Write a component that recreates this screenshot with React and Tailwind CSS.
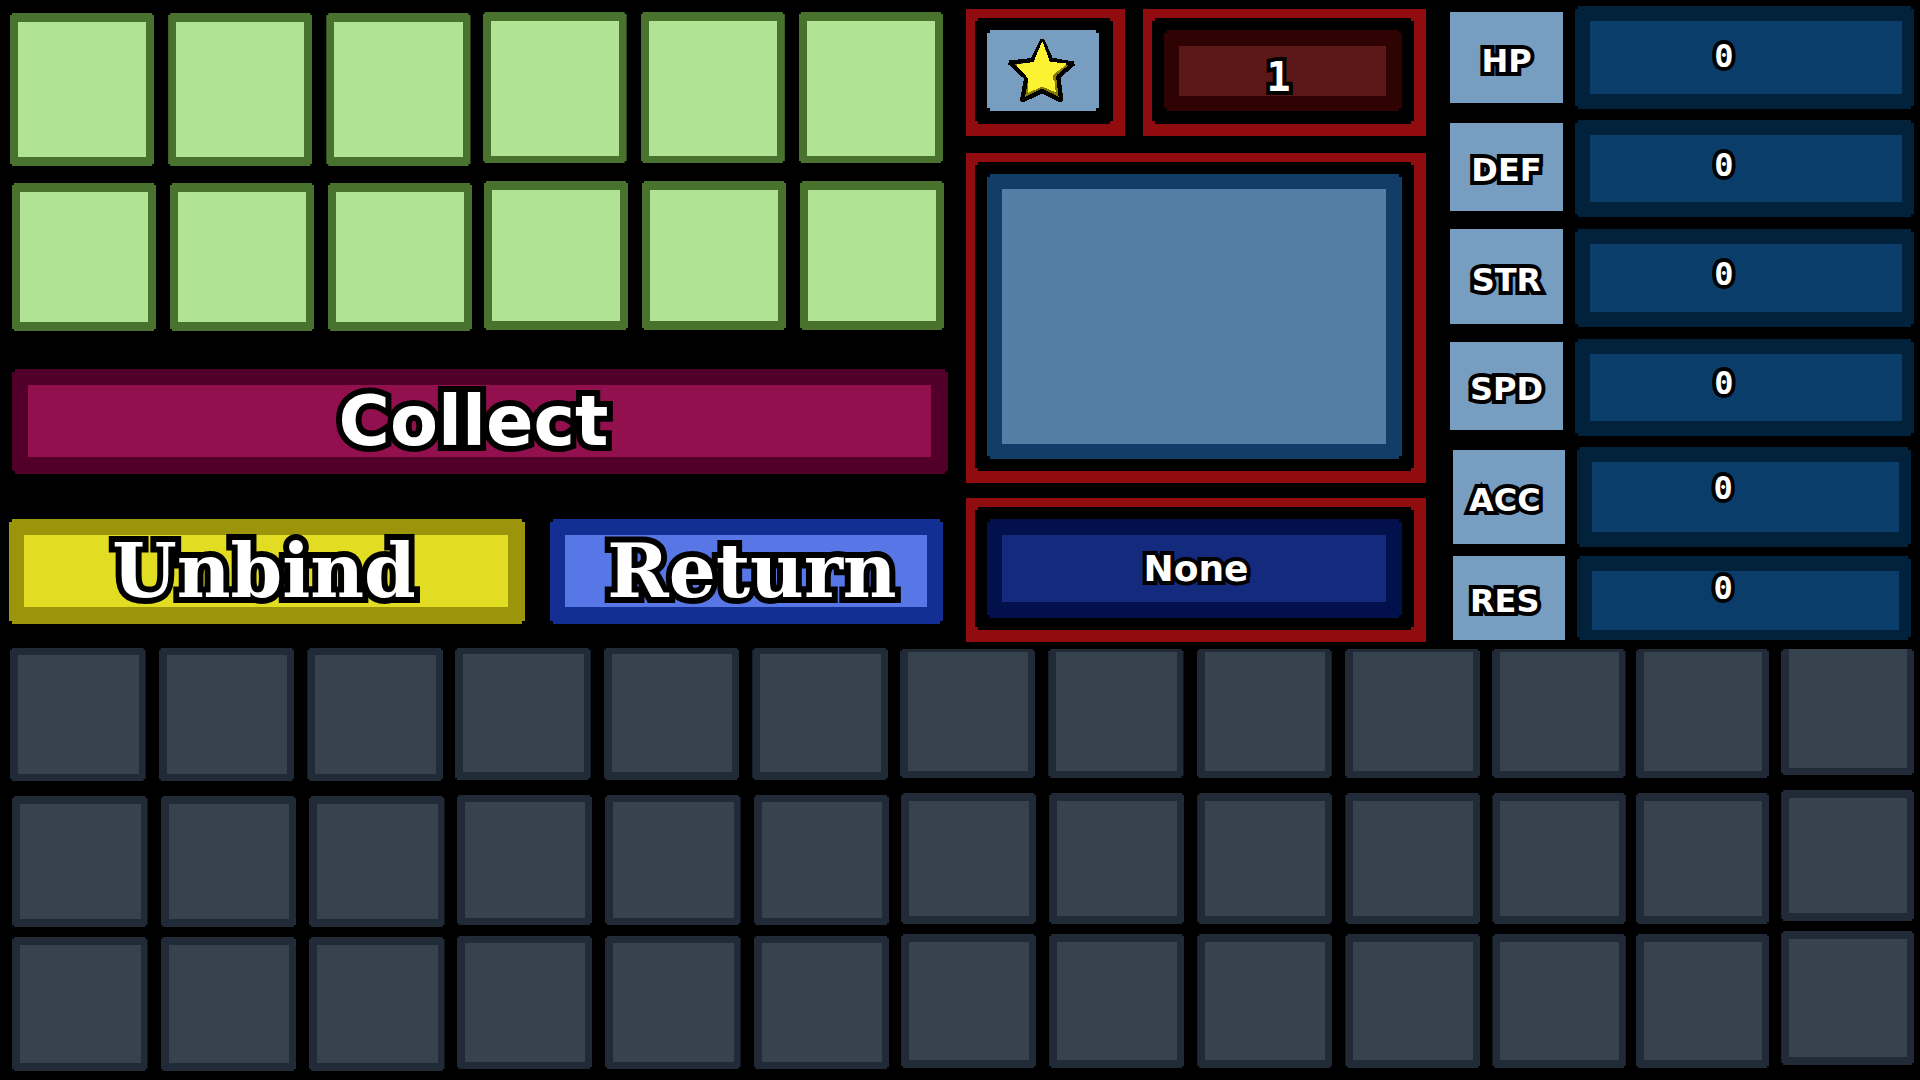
import React from "react";

const NOTCH_2 =
  "[clip-path:polygon(2px_0,calc(100%_-_2px)_0,calc(100%_-_2px)_2px,100%_2px,100%_calc(100%_-_2px),calc(100%_-_2px)_calc(100%_-_2px),calc(100%_-_2px)_100%,2px_100%,2px_calc(100%_-_2px),0_calc(100%_-_2px),0_2px,2px_2px)]";
const NOTCH_3 =
  "[clip-path:polygon(3px_0,calc(100%_-_3px)_0,calc(100%_-_3px)_3px,100%_3px,100%_calc(100%_-_3px),calc(100%_-_3px)_calc(100%_-_3px),calc(100%_-_3px)_100%,3px_100%,3px_calc(100%_-_3px),0_calc(100%_-_3px),0_3px,3px_3px)]";

const OUTLINE_BIG = "[-webkit-text-stroke:12px_#000] [paint-order:stroke_fill]";
const OUTLINE_SMALL = "[-webkit-text-stroke:8px_#000] [paint-order:stroke_fill]";

const SANS = "font-['DejaVu_Sans',sans-serif] font-bold";
const SERIF = "font-['DejaVu_Serif',serif] font-bold";
const MONO = "font-['DejaVu_Sans_Mono',monospace] font-bold";

const times = (n) => Array.from({ length: n }, (_, i) => i);

/* Equipped-item slots: each row has a left and a right bank of three. */
const gearRows = [
  {
    row: "pl-px pr-[5px]",
    banks: [
      { first: 1, pad: "pt-px", tile: "h-[153px] pt-[9px] pb-[9px]" },
      { first: 4, pad: "", tile: "h-[151px] pt-[9px] pb-[7px]" },
    ],
  },
  {
    row: "pl-[3px] pr-1 pt-[15px]",
    banks: [
      { first: 7, pad: "pt-[2px]", tile: "h-[148px] py-[9px]" },
      { first: 10, pad: "", tile: "h-[149px] py-[9px]" },
    ],
  },
];

/* Inventory rows, split into banks that step upward from left to right. */
const inventoryRows = [
  {
    row: "pl-[10px] h-[142px]",
    pads: ["", "", "pt-px", "pt-px", "pt-px"],
    tiles: [
      "h-[133px] py-[7px]",
      "h-[132px] pt-[6px] pb-[8px]",
      "h-[129px] pt-[3px] pb-[7px]",
      "h-[129px] pt-[3px] pb-[7px]",
      "h-[126px] pb-[7px]",
    ],
  },
  {
    row: "pl-3 h-[141px]",
    pads: ["pt-[6px]", "pt-[5px]", "pt-[3px]", "pt-[3px]", ""],
    tiles: ["h-[131px] py-2", "h-[130px] py-[7px]", "h-[131px] py-2", "h-[131px] py-2", "h-[131px] py-2"],
  },
  {
    row: "pl-3 h-[149px]",
    pads: ["pt-[6px]", "pt-[5px]", "pt-[3px]", "pt-[3px]", ""],
    tiles: ["h-[134px] py-2", "h-[133px] py-[7px]", "h-[134px] py-2", "h-[134px] py-2", "h-[134px] py-2"],
  },
];

const inventoryBanks = [
  { first: 1, count: 3, grid: "grid-cols-3 gap-x-[13px]" },
  { first: 4, count: 3, grid: "grid-cols-3 gap-x-[13px]" },
  { first: 7, count: 4, grid: "grid-cols-4 gap-x-[13px]" },
  { first: 11, count: 2, grid: "grid-cols-2 gap-x-[10px]" },
  { first: 13, count: 1, grid: "grid-cols-1" },
];

const stats = [
  { name: "HP", value: 0, row: "mt-[6px]", label: "mt-[6px] h-[91px]", box: "h-[103px] pb-[15px]", text: "pt-[23px]" },
  { name: "DEF", value: 0, row: "mt-[11px]", label: "mt-[3px] h-[88px]", box: "h-[97px] pb-[15px]", text: "pt-[18px]" },
  { name: "STR", value: 0, row: "mt-3", label: "h-[95px]", box: "h-[98px] pb-[15px]", text: "pt-[18px]" },
  { name: "SPD", value: 0, row: "mt-3", label: "mt-[3px] h-[88px]", box: "h-[97px] pb-[15px]", text: "pt-[17px]" },
  { name: "ACC", value: 0, row: "mt-[11px] px-[3px]", label: "mt-[3px] h-[94px] pr-2", box: "h-[100px] pb-[15px]", text: "pt-[14px]" },
  { name: "RES", value: 0, row: "mt-[9px] px-[3px]", label: "h-[84px] pr-2", box: "h-[84px] pb-[10px]", text: "pt-[5px]" },
];

function GearSlot({ index, tile }) {
  return (
    <button type="button" aria-label={`Gear slot ${index}`} className={`block w-full bg-[#49722f] px-2 ${NOTCH_2} ${tile}`}>
      <span className="block h-full bg-[#b1e394]" />
    </button>
  );
}

function InventorySlot({ index, tile }) {
  return (
    <button type="button" aria-label={`Inventory slot ${index}`} className={`block w-full bg-[#202b37] pl-2 pr-[7px] ${NOTCH_2} ${tile}`}>
      <span className="block h-full bg-[#37424f]" />
    </button>
  );
}

function ActionButton({ className, face, children }) {
  return (
    <button type="button" className={`h-[105px] pt-4 pb-[17px] ${NOTCH_3} ${className}`}>
      <span className={`flex h-full items-center justify-center text-white ${face}`}>{children}</span>
    </button>
  );
}

function Frame({ className = "", inner = "p-3", children }) {
  return (
    <div className={`bg-[#900c0f] pt-[9px] pr-3 pb-3 pl-[9px] ${className}`}>
      <div className={`h-full bg-black ${inner} ${NOTCH_3}`}>{children}</div>
    </div>
  );
}

function Star() {
  return (
    <svg viewBox="40 30 219 210" width="73" height="70" shapeRendering="crispEdges" aria-hidden="true">
      <path
        fill="#857a05"
        stroke="#000"
        strokeWidth="13"
        strokeLinejoin="bevel"
        d="M152 42L178 101L245 113L200 152L209 224L152 195L91 224L104 156L54 110L123 102z"
      />
      <path
        fill="#fbf232"
        d="M152 47L160 66L174 107L226 113L214 124L192 140L184 148L184 160L190 168L192 199L176 192L152 182L128 192L109 201L110 160L98 142L72 116L126 108L142 68z"
      />
    </svg>
  );
}

export default function App() {
  return (
    <main className="flex min-h-screen flex-col overflow-hidden bg-black">
      <div className="grid grid-cols-[939fr_460fr_470fr] gap-x-[18px] pl-[9px] pr-[6px]">
        <section className="flex min-w-0 flex-col pt-3">
          {gearRows.map((r, ri) => (
            <div key={ri} className={`grid grid-cols-2 gap-x-3 ${r.row}`}>
              {r.banks.map((b) => (
                <div key={b.first} className={`grid grid-cols-3 gap-x-[14px] ${b.pad}`}>
                  {times(3).map((i) => (
                    <GearSlot key={i} index={b.first + i} tile={b.tile} />
                  ))}
                </div>
              ))}
            </div>
          ))}

          <ActionButton
            className="mt-[38px] ml-[3px] bg-[#52002a] pl-4 pr-[17px]"
            face={`bg-[#93104f] pr-3 text-[70px] leading-none ${SANS} ${OUTLINE_BIG}`}
          >
            Collect
          </ActionButton>

          <div className="mt-[45px] mr-[5px] grid grid-cols-[516fr_393fr] gap-x-[25px]">
            <ActionButton
              className="bg-[#9c950b] pl-[15px] pr-[17px]"
              face={`bg-[#e2dc22] pr-1 text-[74px] leading-none ${SERIF} ${OUTLINE_BIG}`}
            >
              Unbind
            </ActionButton>
            <ActionButton
              className="bg-[#142f93] pl-[15px] pr-4"
              face={`bg-[#5877e6] pl-3 text-[74px] leading-none ${SERIF} ${OUTLINE_BIG}`}
            >
              Return
            </ActionButton>
          </div>
        </section>

        <section className="flex min-w-0 flex-col pt-[9px]">
          <div className="grid grid-cols-[159fr_283fr] gap-x-[18px]">
            <Frame className="h-[127px]" inner="pt-3 pb-[13px] pl-3 pr-[14px]">
              <div className={`flex h-full items-center justify-center bg-[#779dc1] pr-1 ${NOTCH_3}`}>
                <Star />
              </div>
            </Frame>
            <Frame className="h-[127px]" inner="pt-3 pb-[13px] px-3">
              <div className={`h-full bg-[#2f0304] pt-4 pb-[15px] pl-[15px] pr-4 ${NOTCH_3}`}>
                <div className={`flex h-full items-center justify-center bg-[#5c1717] pt-3 pr-2 text-[40px] leading-none text-white ${MONO} ${OUTLINE_SMALL}`}>
                  1
                </div>
              </div>
            </Frame>
          </div>

          <Frame className="mt-[17px] h-[330px]">
            <div className={`h-full bg-[#113d67] py-[15px] pl-[15px] pr-4 ${NOTCH_3}`}>
              <div className="h-full bg-[#557ea4]" />
            </div>
          </Frame>

          <Frame className="mt-[15px] h-[144px]">
            <div className={`h-full bg-[#02114b] py-4 pl-[15px] pr-4 ${NOTCH_3}`}>
              <div className={`flex h-full items-center justify-center bg-[#142a7c] pl-1 text-[36px] leading-6 text-white ${SANS} ${OUTLINE_SMALL}`}>
                None
              </div>
            </div>
          </Frame>
        </section>

        <dl className="flex min-w-0 flex-col pl-[6px]">
          {stats.map((s) => (
            <div key={s.name} className={`grid grid-cols-[113fr_339fr] items-start gap-x-3 ${s.row}`}>
              <dt className={`flex items-center justify-center bg-[#779dc1] pt-[6px] text-[32px] leading-6 text-white ${SANS} ${OUTLINE_SMALL} ${s.label}`}>
                {s.name}
              </dt>
              <dd className={`bg-[#02213b] pt-[15px] pl-[15px] pr-3 ${NOTCH_3} ${s.box}`}>
                <div className={`h-full bg-[#0b3d6b] pr-[44px] text-center text-[32px] leading-6 text-white ${MONO} ${OUTLINE_SMALL} ${s.text}`}>
                  {s.value}
                </div>
              </dd>
            </div>
          ))}
        </dl>
      </div>

      <section className="mt-[6px] pr-[6px]">
        {inventoryRows.map((r, ri) => (
          <div key={ri} className={`grid grid-cols-[433fr_433fr_580fr_277fr_133fr] items-start gap-x-3 ${r.row}`}>
            {inventoryBanks.map((b, bi) => (
              <div key={b.first} className={`grid ${b.grid} ${r.pads[bi]}`}>
                {times(b.count).map((i) => (
                  <InventorySlot key={i} index={ri * 13 + b.first + i} tile={r.tiles[bi]} />
                ))}
              </div>
            ))}
          </div>
        ))}
      </section>
    </main>
  );
}
